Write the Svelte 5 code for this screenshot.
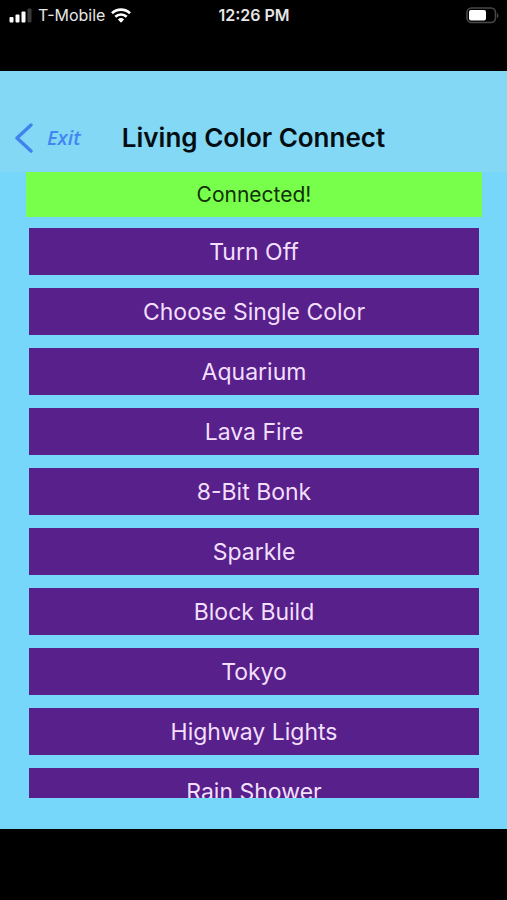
<script lang="ts">
    interface Mode {
        id: string,
        name: string
    }

    const carrier = 'T-Mobile';
    const time = '12:26 PM';

    let connected: boolean = $state(true);
    let selected: string = $state('');

    const modes: Mode[] = [
        { id: 'off', name: 'Turn Off' },
        { id: 'single', name: 'Choose Single Color' },
        { id: 'aquarium', name: 'Aquarium' },
        { id: 'lava', name: 'Lava Fire' },
        { id: 'bonk', name: '8-Bit Bonk' },
        { id: 'sparkle', name: 'Sparkle' },
        { id: 'block', name: 'Block Build' },
        { id: 'tokyo', name: 'Tokyo' },
        { id: 'highway', name: 'Highway Lights' },
        { id: 'rain', name: 'Rain Shower' }
    ];
</script>

<div class="screen">
    <div class="status_bar">
        <div class="status_left">
            <svg class="signal" viewBox="0 0 23 15" aria-hidden="true">
                <rect x="0.5" y="9" width="4" height="5.5" rx="1" fill="#fff" />
                <rect x="6.5" y="6.5" width="4" height="8" rx="1" fill="#fff" />
                <rect x="12.5" y="3.5" width="4" height="11" rx="1" fill="#fff" />
                <rect x="18.5" y="0.5" width="4" height="14" rx="1" fill="#3a3a3a" />
            </svg>
            <span class="carrier">{carrier}</span>
            <svg class="wifi" viewBox="0 0 20 15" aria-hidden="true">
                <g fill="none" stroke="#fff" stroke-width="2.7">
                    <path d="M1 5.3a12.8 12.8 0 0 1 18 0" />
                    <path d="M4.3 8.8a8.2 8.2 0 0 1 11.4 0" />
                </g>
                <path d="M6.9 11.5a4.5 4.5 0 0 1 6.2 0L10 14.8z" fill="#fff" />
            </svg>
        </div>
        <span class="time">{time}</span>
        <div class="status_right">
            <svg class="battery" viewBox="0 0 33 17" aria-hidden="true">
                <rect x="1" y="1" width="28.5" height="14.5" rx="4.5" fill="none" stroke="#484848" stroke-width="1.6" />
                <rect x="3" y="3" width="17" height="10.5" rx="2" fill="#fff" />
                <path d="M31 6c2 1 2 4 0 5z" fill="#484848" />
            </svg>
        </div>
    </div>

    <header>
        <a class="exit" href="#exit">
            <svg class="chevron" viewBox="0 0 20 30" aria-hidden="true">
                <path d="M17 2 3 15l14 13" />
            </svg>
            Exit
        </a>
        <h1>Living Color Connect</h1>
    </header>

    <main>
        <div class="connection" role="status">{connected ? 'Connected!' : 'Disconnected'}</div>
        <div class="modes">
            {#each modes as mode (mode.id)}
                <button aria-pressed={selected == mode.id} onclick={() => selected = mode.id}>{mode.name}</button>
            {/each}
        </div>
    </main>
</div>

<style>
    :global(body) {
        margin: 0;
        background-color: #000;
    }

    .screen {
        box-sizing: border-box;
        height: 100vh;
        padding-bottom: 71px;
        display: flex;
        flex-direction: column;
        background-color: #000;
        font-family: Inter, 'Liberation Sans', sans-serif;
    }

    .status_bar {
        display: grid;
        grid-template-columns: 1fr auto 1fr;
        align-items: center;
        padding: 4px 8px 44px 9px;
        flex-shrink: 0;
        color: #e6e6e6;
        font-size: 16px;
        line-height: 23px;
    }

    .status_left {
        display: flex;
        align-items: center;
        gap: 6px;
    }

    .status_right {
        display: flex;
        justify-content: flex-end;
    }

    .signal {
        width: 23px;
        height: 15px;
    }

    .wifi {
        width: 20px;
        height: 15px;
    }

    .battery {
        width: 33px;
        height: 17px;
    }

    .time {
        font-weight: 600;
    }

    header {
        display: grid;
        grid-template-columns: 1fr auto 1fr;
        align-items: center;
        padding: 33px 14px 1px;
        height: 67px;
        flex-shrink: 0;
        background-color: #82d8f5;
    }

    .exit {
        display: flex;
        align-items: center;
        gap: 13px;
        color: #4287f0;
        font-family: 'Liberation Sans Narrow', 'Open Sans', sans-serif;
        font-size: 20px;
        font-style: italic;
        font-weight: 600;
        line-height: 32px;
        text-decoration: none;
    }

    .chevron {
        width: 20px;
        height: 30px;
        fill: none;
        stroke: #3f83ee;
        stroke-width: 3.4;
        stroke-linecap: round;
        stroke-linejoin: round;
    }

    h1 {
        margin: 0;
        color: #030c10;
        font-size: 26px;
        font-weight: 600;
        line-height: 32px;
    }

    main {
        display: flex;
        flex-direction: column;
        flex: 1;
        min-height: 0;
        padding: 0 25px 31px 26px;
        background-color: #77d7fb;
    }

    .connection {
        flex-shrink: 0;
        background-color: #78ff4b;
        color: #123008;
        font-size: 21px;
        line-height: 45px;
        text-align: center;
    }

    .modes {
        display: flex;
        flex-direction: column;
        flex: 1;
        min-height: 0;
        gap: 13px;
        margin: 11px 3px 0;
        overflow-y: auto;
        scrollbar-width: none;
    }

    button {
        flex-shrink: 0;
        border: none;
        padding: 2px 0 0;
        background-color: #58208b;
        color: #f1dffc;
        font-family: inherit;
        font-size: 23px;
        line-height: 45px;
        cursor: pointer;
    }

    button:active {
        filter: brightness(85%);
    }
</style>
